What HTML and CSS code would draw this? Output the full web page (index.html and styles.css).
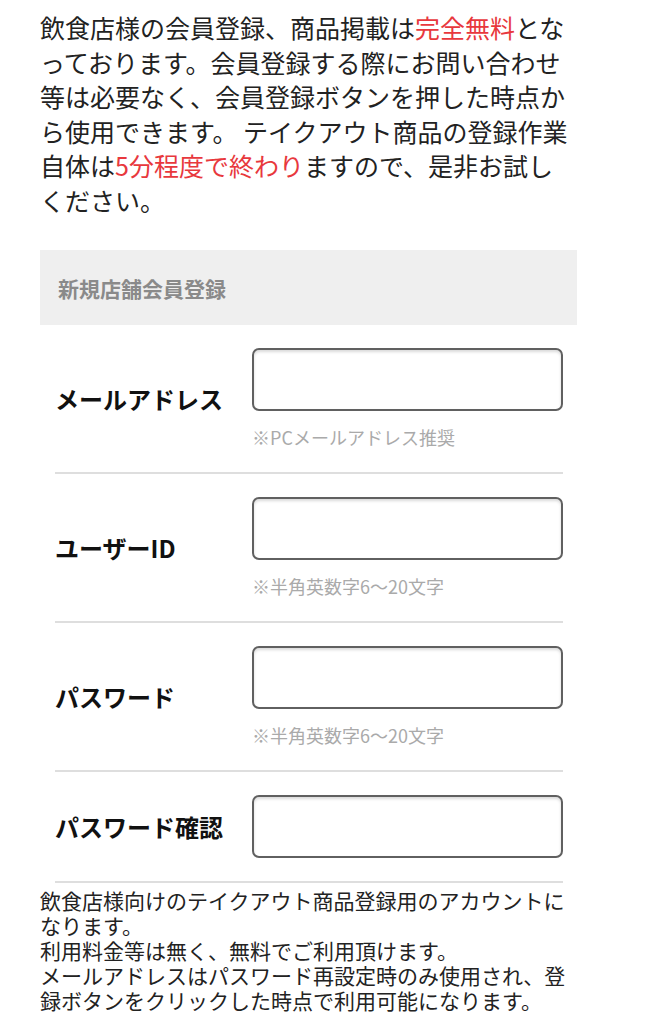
FILE: index.html
```html
<!DOCTYPE html>
<html lang="ja">
<head>
    <meta charset="UTF-8">
    <meta name="viewport" content="width=device-width, initial-scale=1.0">
    <title>新規店舗会員登録</title>
    <link rel="stylesheet" href="styles.css">
</head>
<body>
    <div class="page">
        <!-- Intro -->
        <p class="intro">飲食店様の会員登録、商品掲載は<span class="red">完全無料</span>とな<br>っております。会員登録する際にお問い合わせ<br>等は必要なく、会員登録ボタンを押した時点か<br>ら使用できます。 テイクアウト商品の登録作業<br>自体は<span class="red">5分程度で終わり</span>ますので、是非お試し<br>ください。</p>

        <!-- Form -->
        <div class="form-title">新規店舗会員登録</div>
        <form class="reg-form">
            <div class="form-row">
                <label class="form-label" for="email">メールアドレス</label>
                <div class="form-field">
                    <input type="text" id="email">
                    <div class="hint">※PCメールアドレス推奨</div>
                </div>
            </div>
            <div class="form-row">
                <label class="form-label" for="userid">ユーザーID</label>
                <div class="form-field">
                    <input type="text" id="userid">
                    <div class="hint">※半角英数字6～20文字</div>
                </div>
            </div>
            <div class="form-row">
                <label class="form-label" for="pass">パスワード</label>
                <div class="form-field">
                    <input type="password" id="pass">
                    <div class="hint">※半角英数字6～20文字</div>
                </div>
            </div>
            <div class="form-row">
                <label class="form-label" for="pass2">パスワード確認</label>
                <div class="form-field">
                    <input type="password" id="pass2">
                </div>
            </div>
        </form>

        <p class="note">飲食店様向けのテイクアウト商品登録用のアカウントに<br>なります。<br>利用料金等は無く、無料でご利用頂けます。<br>メールアドレスはパスワード再設定時のみ使用され、登<br>録ボタンをクリックした時点で利用可能になります。</p>
    </div>
</body>
</html>
```

FILE: styles.css
```css
* {
    margin: 0;
    padding: 0;
    box-sizing: border-box;
    font-family: 'Noto Sans CJK JP', sans-serif;
}

body {
    background-color: #fff;
    color: #222;
}

.page {
    width: 537px;
    margin-left: 40px;
}

/* Intro */
.intro {
    font-size: 25px;
    line-height: 34.5px;
    padding-top: 10px;
    color: #222;
    line-break: anywhere;
}

.red {
    color: #e8383d;
}

/* Form */
.form-title {
    margin-top: 33px;
    height: 75px;
    background: #efefef;
    color: #8a8a8a;
    font-size: 21px;
    font-weight: bold;
    display: flex;
    align-items: center;
    padding-left: 18px;
}

.reg-form {
    margin: 0 14px 0 15px;
}

.form-row {
    display: flex;
    align-items: center;
    padding: 23px 0;
    border-bottom: 2px solid #dedede;
}

.form-label {
    width: 197px;
    font-size: 24px;
    font-weight: bold;
    color: #111;
}

.form-field {
    flex: 1;
}

.form-field input {
    display: block;
    width: 100%;
    height: 63px;
    border: 2px solid #606060;
    border-radius: 7px;
    box-shadow: inset 0 2px 3px rgba(0, 0, 0, 0.15);
    background: #fff;
    font-size: 20px;
    padding: 0 10px;
}

.hint {
    margin-top: 14px;
    font-size: 18px;
    line-height: 24px;
    color: #aaa;
}

.note {
    margin-top: 6px;
    font-family: 'Liberation Sans', 'Noto Sans CJK JP', sans-serif;
    font-size: 21px;
    line-height: 25px;
    color: #222;
}
```
